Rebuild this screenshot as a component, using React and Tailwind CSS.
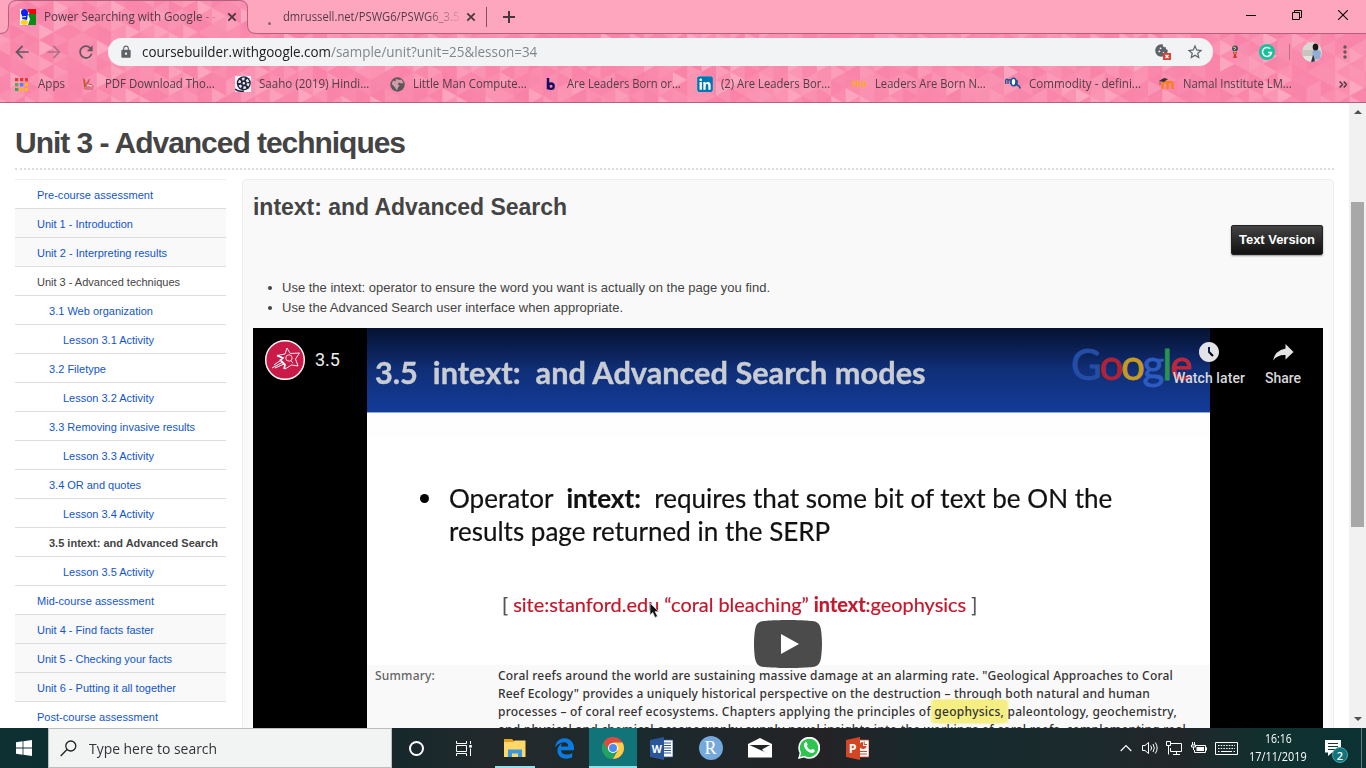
import React, { useLayoutEffect, useRef, useState } from "react";
import { MdArrowBack, MdArrowForward, MdRefresh, MdLock, MdStarBorder, MdCookie, MdAccessTimeFilled, MdMoreVert } from "react-icons/md";
import { FaLinkedin, FaEdgeLegacy } from "react-icons/fa6";

/* Spreads a single line of text over the width of its box. */
function Fit({ className = "", children }) {
  const ref = useRef(null);
  const [spacing, setSpacing] = useState(0);
  useLayoutEffect(() => {
    const el = ref.current;
    const natural = el.getBoundingClientRect().width;
    setSpacing((el.parentElement.clientWidth - natural) / el.textContent.length);
  }, []);
  return (
    <span className={"block shrink-0 whitespace-pre " + className}>
      <span ref={ref} className="inline-block" style={{ letterSpacing: spacing + "px" }}>{children}</span>
    </span>
  );
}

/* Condenses a single line of text to the width of its box. */
function Squeeze({ className = "", inner = "", children }) {
  const ref = useRef(null);
  const [scale, setScale] = useState(1);
  useLayoutEffect(() => {
    const el = ref.current;
    setScale(el.parentElement.clientWidth / el.offsetWidth);
  }, []);
  return (
    <span className={"block shrink-0 whitespace-pre " + className}>
      <span ref={ref} className={"inline-block origin-left " + inner} style={{ transform: `scaleX(${scale})` }}>{children}</span>
    </span>
  );
}

function rand(seed) {
  const v = Math.sin(seed * 127.1 + 11.7) * 43758.5453;
  return v - Math.floor(v);
}

function ThemeBackdrop() {
  const tris = [];
  const w = 14.4;
  const h = 16;
  for (let c = 0; c < 96; c++) {
    for (let r = -1; r < 14; r++) {
      const x = c * w - 4;
      const y = (r * h) / 2;
      const right = (r + c) % 2 === 0;
      const k = rand(c * 31 + r * 7.3 + 5);
      const pts = right
        ? `${x},${y} ${x + w},${y + h / 2} ${x},${y + h}`
        : `${x + w},${y} ${x},${y + h / 2} ${x + w},${y + h}`;
      const light = k > 0.4;
      tris.push(
        <polygon key={c + "_" + r} points={pts} fill={light ? "#ffc0d0" : "#f7759f"} opacity={light ? (right ? (k - 0.35) * 0.85 : (k - 0.38) * 0.35) : (0.45 - k) * 0.8} />
      );
    }
  }
  return (
    <svg className="absolute inset-0" width="1366" height="103" viewBox="0 0 1366 103">
      <rect width="1366" height="103" fill="#fa8bae" />
      {tris}
      <path d="M0 0H16Q8.500 .5 8.500 8V25Q8.500 33.500 0 33.500ZM240 0H1366V33.500H256Q247.500 33.500 247.500 25V8Q247.500 .5 240 0Z" fill="#ffa6bf" />
      <path d="M0 33.500Q8.500 33.500 8.500 25V8.500Q8.500 .5 16.500 .5H239.500Q247.500 .5 247.500 8.500V25Q247.500 33.500 256 33.500H1366" fill="none" stroke="#b2607e" />
      <path d="M0 102.500H1366" stroke="#b2607e" />
    </svg>
  );
}

function Cross({ className = "" }) {
  return (
    <svg className={"shrink-0 " + className} width="10" height="10" viewBox="0 0 10 10"><path d="M1.300 1.300L8.700 8.700M8.700 1.300L1.300 8.700" stroke="#46363d" strokeWidth="1.700" /></svg>
  );
}

const ui = "font-['Open_Sans','Noto_Sans',sans-serif]";

function TabStrip() {
  return (
    <div className="relative flex h-[34px] items-center">
      <svg className="ml-[20px] shrink-0" width="16" height="16" viewBox="0 0 16 16">
        <rect width="16" height="16" fill="#fff" />
        <path d="M7 0H16V6H10Z" fill="#f00" /><path d="M8 5H16V16H8L10 10Z" fill="#0a8a14" />
        <circle cx="4.500" cy="3.500" r="3.500" fill="#0b24f5" /><path d="M2 6L8 4 7 11 2 10Z" fill="#0b24f5" /><path d="M2 8L6 7.500" stroke="#fff" /><ellipse cx="4.300" cy="13.300" rx="3.600" ry="2.600" fill="#ffd21c" />
      </svg>
      <Squeeze className="ml-[8px] w-[172px] text-[12px]" inner="bg-gradient-to-r from-[#4b3841] from-90% to-[#4b384133] bg-clip-text text-transparent">Power Searching with Google - -</Squeeze>
      <Cross className="ml-[11px]" />
      <span className="ml-[31px] mt-[13px] size-[3px] shrink-0 rounded-full bg-[#8f6473]" />
      <Squeeze className="ml-[12px] w-[176px] text-[12px]" inner="bg-gradient-to-r from-[#4b3841] from-80% to-[#4b384122] bg-clip-text text-transparent">dmrussell.net/PSWG6/PSWG6_3.5</Squeeze>
      <Cross className="ml-[7px]" />
      <span className="ml-[10px] h-[20px] w-px shrink-0 bg-[#7b5361]" />
      <svg className="ml-[16px] shrink-0" width="12" height="12" viewBox="0 0 12 12"><path d="M6 0V12M0 6H12" stroke="#46363d" strokeWidth="2" /></svg>
      <div className="mb-[5px] ml-auto mr-[18px] flex items-center gap-[36px]">
        <svg width="10" height="10"><path d="M0 5.500H10" stroke="#000" /></svg>
        <svg width="10" height="10"><path d="M.5 2.500H7.500V9.500H.5ZM2.500 2.500V.5H9.500V7.500H7.500" fill="none" stroke="#000" /></svg>
        <svg width="10" height="10"><path d="M0 0L10 10M10 0L0 10" stroke="#000" strokeWidth="1.100" /></svg>
      </div>
    </div>
  );
}

function Toolbar() {
  return (
    <div className="relative flex h-[36px] items-center text-[#5f5860]">
      <MdArrowBack className="ml-[12px] size-[20px] shrink-0" />
      <MdArrowForward className="ml-[12px] size-[20px] shrink-0 opacity-50" />
      <MdRefresh className="ml-[12px] size-[20px] shrink-0" />
      <div className="ml-[12px] flex h-[28px] w-[1105px] shrink-0 items-center rounded-full bg-[#f1f3f4]">
        <MdLock className="ml-[11px] size-[14px] text-[#5f6368]" />
        <Squeeze className="ml-[9px] w-[395px] text-[14px] leading-[20px] text-[#80868b]"><span className="text-[#202124]">coursebuilder.withgoogle.com</span>/sample/unit?unit=25&amp;lesson=34</Squeeze>
        <span className="relative ml-auto mr-[16px] flex size-[16px] text-[#5f6368]">
          <MdCookie className="-mt-px size-[15px]" />
          <svg className="absolute bottom-0 right-[-1px]" width="8" height="7" viewBox="0 0 8 7"><rect width="8" height="7" fill="#db4437" /><path d="M2.500 2L5.500 5M5.500 2L2.500 5" stroke="#fff" strokeWidth="1.200" /></svg>
        </span>
        <MdStarBorder className="mr-[9px] size-[18px] text-[#5f6368]" />
      </div>
      <svg className="ml-[18px] shrink-0" width="8" height="14" viewBox="0 0 8 14"><circle cx="4" cy="3.500" r="3" fill="#3b5966" /><path d="M2 2L5 3 3 5" stroke="#e8b45b" fill="none" /><path d="M2 7H6L5 10 6 13H2L3 10Z" fill="#c63b32" /><path d="M4 6V9" stroke="#e9b25b" /></svg>
      <svg className="ml-[20px] shrink-0" width="16" height="16" viewBox="0 0 16 16"><circle cx="8" cy="8" r="8" fill="#15c39a" /><path d="M11.300 4.800A4.500 4.500 0 1 0 12.500 8.500H9M12.500 8.500L11 11" fill="none" stroke="#fff" strokeWidth="1.500" /></svg>
      <span className="ml-[14px] h-[16px] w-px shrink-0 bg-[#bd6f88]" />
      <svg className="ml-[12px] shrink-0 rounded-full" width="20" height="20" viewBox="0 0 20 20"><rect width="20" height="20" fill="#d9d8d3" /><path d="M0 8H12V20H0Z" fill="#c6c5bf" /><path d="M0 14H12V20H0Z" fill="#e5e3de" /><path d="M10.500 9Q15 5 19 10L18 17 11 18Z" fill="#8eaed6" /><ellipse cx="13.500" cy="5" rx="2.800" ry="3.500" fill="#1c1719" /><path d="M11 13L9 20H13L12 15Z" fill="#302e38" /></svg>
      <MdMoreVert className="ml-[13px] size-[20px] shrink-0" />
    </div>
  );
}

const bookmarks = [
  ["w-[110px]", "PDF Download Tho...", <svg width="16" height="16" viewBox="0 0 16 16"><path d="M2 2Q5 3 5 12H3Z" fill="#c45a20" /><path d="M5 8Q8 2 9 3L7 9Q10 6 12 10L6 14Z" fill="#d94c5d" /><path d="M2 12Q8 7 13 10L12 14H4Z" fill="#e07587" /><path d="M6 9L11 10" stroke="#fff" /></svg>],
  ["w-[110px]", "Saaho (2019) Hindi...", <svg width="16" height="16" viewBox="0 0 16 16"><rect width="16" height="16" fill="#f1f1f5" /><circle cx="8.800" cy="7.300" r="7" fill="#20243c" /><circle cx="8.800" cy="7.300" r="4.400" fill="none" stroke="#e8e9ef" strokeWidth="2.600" strokeDasharray="2.600 2" /><circle cx="8.800" cy="7.300" r="1.200" fill="#fff" /><path d="M0 13Q3 16 9 15" stroke="#20243c" strokeWidth="1.500" fill="none" /></svg>],
  ["w-[114px]", "Little Man Compute...", <svg width="15" height="15" viewBox="0 0 15 15"><circle cx="7.500" cy="7.500" r="7.200" fill="#5d565b" /><path d="M6 1.800Q8 3.500 11.500 2.500L13.500 6 11 6.500 9.500 5.500 7.500 7 9.500 8.500 8 10.500 7 13.500 5 10.500 1.800 7 3 3.500 5.500 4.500Z" fill="#f8b5c8" opacity=".75" /></svg>],
  ["w-[114px]", "Are Leaders Born or...", <svg width="16" height="16" viewBox="0 0 16 16"><path d="M5 2V13.300" stroke="#160b63" strokeWidth="2.500" /><circle cx="8" cy="10.200" r="2.700" fill="none" stroke="#160b63" strokeWidth="2.300" /></svg>],
  ["w-[109px]", "(2) Are Leaders Bor...", <span className="flex size-[16px] items-center justify-center overflow-hidden rounded-[2px] bg-white"><FaLinkedin className="size-[18px] shrink-0 text-[#0077b5]" /></span>],
  ["w-[111px]", "Leaders Are Born N...", <span className="text-[8px] font-extrabold tracking-[-0.3px] text-[#f9a63f]">PhD</span>],
  ["w-[112px]", "Commodity - defini...", <svg width="16" height="16" viewBox="0 0 16 16" fill="none" stroke="#155593"><path d="M.7 8V4Q3 2 3 5V8M3 5Q5 2 5.500 5V8" strokeWidth="1.300" /><ellipse cx="8.500" cy="6" rx="2.500" ry="3.800" fill="#fff" strokeWidth="1.500" /><path d="M10 10L12 4V9Q14 9 15.500 12.500" strokeWidth="1.500" /></svg>],
  ["w-[109px]", "Namal Institute LM...", <svg width="16" height="16" viewBox="0 0 16 16"><path d="M3.500 13V8Q3.500 6 6 6T8.500 8V13M8.500 8Q8.500 6 11 6T13.500 8V13" fill="none" stroke="#f98012" strokeWidth="2.300" /><path d="M0 5L5 2 9 3 5 6Z" fill="#333" /><path d="M1 5V9" stroke="#555" strokeWidth=".7" /></svg>],
];

function BookmarksBar() {
  const dots = ["#e53935", "#e53935", "#e53935", "#4caf50", "#4285f4", "#fbbc05", "#43a047", "#fbbc05", "#fbbc05"];
  return (
    <div className="relative flex h-[28px] items-center text-[12px] text-[#503d46]">
      <svg className="ml-[15px] shrink-0" width="13" height="13" viewBox="0 0 13 13">
        {dots.map((d, i) => <rect key={i} x={(i % 3) * 5} y={Math.floor(i / 3) * 5} width="3.300" height="3.300" fill={d} />)}
      </svg>
      <Squeeze className="ml-[10px] w-[27px]">Apps</Squeeze>
      <div className="ml-[16px] flex">
        {bookmarks.map(([w, label, icon]) => (
          <div key={label} className="flex w-[154px] shrink-0 items-center gap-[8px]">
            <span className="flex w-[16px] shrink-0 items-center justify-center">{icon}</span>
            <Squeeze className={w}>{label}</Squeeze>
          </div>
        ))}
      </div>
      <svg className="ml-[26px] shrink-0" width="8" height="7" viewBox="0 0 8 7"><path d="M.7 .5L3.500 3.500.7 6.500M4.700 .5L7.500 3.500 4.700 6.500" fill="none" stroke="#46363d" strokeWidth="1.400" /></svg>
    </div>
  );
}

const lessons = [
  ["Pre-course assessment", "ml-[22px] w-[116px]", "bg-white text-[#1155cc]"],
  ["Unit 1 - Introduction", "ml-[22px] w-[96px]", "bg-[#f9f9f9] text-[#1155cc]"],
  ["Unit 2 - Interpreting results", "ml-[22px] w-[130px]", "bg-[#f9f9f9] text-[#1155cc]"],
  ["Unit 3 - Advanced techniques", "ml-[22px] w-[143px]", "bg-white text-[#444]"],
  ["3.1 Web organization", "ml-[34px] w-[104px]", "bg-white text-[#1155cc]"],
  ["Lesson 3.1 Activity", "ml-[48px] w-[91px]", "bg-white text-[#1155cc]"],
  ["3.2 Filetype", "ml-[34px] w-[57px]", "bg-white text-[#1155cc]"],
  ["Lesson 3.2 Activity", "ml-[48px] w-[91px]", "bg-white text-[#1155cc]"],
  ["3.3 Removing invasive results", "ml-[34px] w-[146px]", "bg-white text-[#1155cc]"],
  ["Lesson 3.3 Activity", "ml-[48px] w-[91px]", "bg-white text-[#1155cc]"],
  ["3.4 OR and quotes", "ml-[34px] w-[92px]", "bg-white text-[#1155cc]"],
  ["Lesson 3.4 Activity", "ml-[48px] w-[91px]", "bg-white text-[#1155cc]"],
  ["3.5 intext: and Advanced Search", "ml-[34px] w-[169px] font-bold", "bg-white text-[#444]"],
  ["Lesson 3.5 Activity", "ml-[48px] w-[91px]", "bg-white text-[#1155cc]"],
  ["Mid-course assessment", "ml-[22px] w-[117px]", "bg-white text-[#1155cc]"],
  ["Unit 4 - Find facts faster", "ml-[22px] w-[117px]", "bg-[#f9f9f9] text-[#1155cc]"],
  ["Unit 5 - Checking your facts", "ml-[22px] w-[135px]", "bg-[#f9f9f9] text-[#1155cc]"],
  ["Unit 6 - Putting it all together", "ml-[22px] w-[139px]", "bg-[#f9f9f9] text-[#1155cc]"],
  ["Post-course assessment", "ml-[22px] w-[121px]", "bg-white text-[#1155cc]"],
];

function Sidebar() {
  return (
    <nav className="w-[211px] shrink-0 border-t border-[#eee] text-[11px] leading-[28px]">
      {lessons.map(([label, pos, tone]) => (
        <div key={label} className={"flex h-[29px] border-b border-[#ddd] pt-px " + tone}>
          <Fit className={pos}>{label}</Fit>
        </div>
      ))}
    </nav>
  );
}

function Slide() {
  return (
    <div className="ml-[114px] flex h-[400px] w-[843px] flex-col overflow-hidden bg-white font-['Lato',sans-serif] text-[#111]">
      <div className="flex h-[85px] shrink-0 items-start border-b border-[#8fa6d6] bg-gradient-to-b from-[#061231] via-[#102f78] to-[#123b98]">
        <Squeeze className="ml-[8px] mt-[24px] w-[551px] text-[30.5px] leading-[40px] text-[#c9cdd3]" inner="font-bold [-webkit-text-stroke:0.4px_currentColor]">3.5  intext:  and Advanced Search modes</Squeeze>
        <Fit className="ml-[145px] mt-[11px] w-[119px] text-[42px] leading-[50px] text-[#2d5cc0] [-webkit-text-stroke:0.800px_currentColor]">
          <span className="text-[#244da5]">G</span><span className="text-[#b02334]">o</span><span className="text-[#c49a24]">o</span><span>g</span><span className="text-[#2a9350]">l</span><span className="text-[#c02638]">e</span>
        </Fit>
      </div>
      <div className="flex h-[252px] shrink-0 flex-col border-t-[24px] border-[#fefefe] pt-[44px]">
        <div className="ml-[53px] flex items-center">
          <span className="mt-[1px] size-[9px] rounded-full bg-black" />
          <Squeeze className="ml-[20px] w-[663px] text-[26.5px] leading-[34px]" inner="[-webkit-text-stroke:0.2px_currentColor]">Operator  <b>intext:</b>  requires that some bit of text be ON the</Squeeze>
        </div>
        <Squeeze className="ml-[82px] w-[381px] text-[26.5px] leading-[33px]" inner="[-webkit-text-stroke:0.2px_currentColor]">results page returned in the SERP</Squeeze>
        <Squeeze className="ml-[135px] mt-[42px] w-[475px] text-[20px] leading-[28px] text-[#c4172b]" inner="[-webkit-text-stroke:0.2px_currentColor]"><span className="text-[#555]">[ </span>site:stanford.edu “coral bleaching” <b>intext</b>:geophysics<span className="text-[#555]"> ]</span></Squeeze>
      </div>
      <div className="flex grow bg-[#f9f9f9] pt-[2px] font-['Noto_Sans',sans-serif] text-[12px] leading-[18px] text-[#333]">
        <Fit className="ml-[8px] w-[60px] font-medium text-[#666]">Summary:</Fit>
        <div className="ml-[63px] font-medium">
          <Fit className="w-[675px]">Coral reefs around the world are sustaining massive damage at an alarming rate. "Geological Approaches to Coral</Fit>
          <Fit className="w-[652px]">Reef Ecology" provides a uniquely historical perspective on the destruction – through both natural and human</Fit>
          <Fit className="w-[679px]">processes – of coral reef ecosystems. Chapters applying the principles of <span className="bg-[#f5ef83] py-[3px] shadow-[-3px_0_2px_#f5ef83,4px_0_2px_#f5ef83]">geophysics,</span> paleontology, geochemistry,</Fit>
          <Fit className="w-[688px]">and physical and chemical oceanography supply novel insights into the workings of coral reefs, complementing real</Fit>
        </div>
      </div>
    </div>
  );
}

function Video() {
  return (
    <div className="relative h-[400px] w-[1070px] overflow-hidden bg-black font-['Roboto',sans-serif]">
      <Slide />
      <div className="absolute left-[12px] top-[12px] flex items-center">
        <svg width="40" height="40" viewBox="0 0 40 40">
          <circle cx="20" cy="20" r="19.300" fill="#c91a48" stroke="#fff" strokeWidth="1.400" />
          <path d="M22 8L25.200 13.500 34.500 13 30.500 19 33 26 26.500 25 20 29 19.500 25 15.500 21 18 18 12 15.500 20 14Z" fill="none" stroke="#fff" strokeWidth=".9" />
          <circle cx="24" cy="18" r="3.200" fill="none" stroke="#fff" strokeWidth=".8" /><path d="M26 21L28 23" stroke="#fff" strokeWidth=".8" />
          <path d="M12 15.500L18 18 15.500 20 20 24.500 19 29" fill="none" stroke="#fff" strokeWidth="1.600" /><path d="M16 20L9 25M18 22L7 28M19 24L10 28" stroke="#fff" strokeWidth="1" />
        </svg>
        <Fit className="ml-[10px] mt-[-2px] w-[25px] text-[18px] text-[#eee]">3.5</Fit>
      </div>
      <div className="absolute left-[920px] top-[12px] flex w-[72px] flex-col items-center text-[14px] font-medium text-[#e4e4e8]">
        <MdAccessTimeFilled className="size-[24px]" />
        <Fit className="mt-[4px] w-[72px] text-[#d8d8dc]">Watch later</Fit>
      </div>
      <div className="absolute left-[1012px] top-[12px] flex w-[36px] flex-col items-center text-[14px] font-medium text-[#d8d8dc]">
        <svg width="24" height="24" viewBox="0 0 24 24"><path d="M14.500 4L22.500 12 14.500 19.500V15Q6.500 14.500 2 20.500Q4 10.500 14.500 8.500Z" fill="#e4e4e4" /></svg>
        <Fit className="mt-[4px] w-[36px]">Share</Fit>
      </div>
      <svg className="absolute left-[396px] top-[275px]" width="12" height="17" viewBox="0 0 12 17"><path d="M1 0V12L3.800 9.500 6 14.500 8.500 13.200 6 8.500H9.500Z" fill="#111" stroke="#ddd" strokeWidth=".7" /></svg>
      <svg className="absolute left-[501px] top-[292px]" width="68" height="48" viewBox="0 0 68 48">
        <path d="M66.520 7.740c-.78-2.930-2.490-5.410-5.420-6.190C55.790.13 34 0 34 0S12.210.13 6.900 1.550C3.970 2.330 2.270 4.810 1.480 7.740.06 13.050 0 24 0 24s.06 10.950 1.480 16.260c.78 2.930 2.490 5.410 5.420 6.190C12.210 47.870 34 48 34 48s21.790-.13 27.100-1.550c2.930-.78 4.640-3.260 5.420-6.190C67.940 34.950 68 24 68 24s-.06-10.950-1.480-16.260z" fill="#4b4b4b" />
        <path d="M45 24L27 14V34" fill="#fff" />
      </svg>
    </div>
  );
}

function Page() {
  return (
    <div className="flex h-[625px] overflow-hidden bg-white font-['Liberation_Sans',Arial,sans-serif] text-[#444]">
      <div className="w-[1349px] pl-[15px] pr-[15px] pt-[20px]">
        <div className="h-[47px] border-b-2 border-dotted border-[#ddd]">
          <Fit className="w-[390px] text-[30px] font-bold leading-[40px]">Unit 3 - Advanced techniques</Fit>
        </div>
        <div className="mt-[9px] flex justify-between">
          <Sidebar />
          <main className="w-[1092px] rounded-[4px] border border-[#eee] bg-[#f9f9f9] pl-[10px]">
            <Fit className="mt-[12px] w-[314px] text-[23px] font-bold leading-[30px]">intext: and Advanced Search</Fit>
            <div className="mr-[10px] mt-[3px] flex justify-end">
              <div className="flex h-[30px] w-[92px] items-center justify-center rounded-[2px] border border-[#222] bg-gradient-to-b from-[#444] to-[#111] text-[13px] font-bold text-white shadow-[0_1px_2px_rgba(0,0,0,0.4)]">
                <Fit className="w-[76px]">Text Version</Fit>
              </div>
            </div>
            <ul className="mt-[23px] text-[13px] leading-[20px]">
              <li className="flex items-center"><span className="ml-[15px] size-[4px] rounded-full bg-[#444]" /><Fit className="ml-[10px] w-[488px]">Use the intext: operator to ensure the word you want is actually on the page you find.</Fit></li>
              <li className="flex items-center"><span className="ml-[15px] size-[4px] rounded-full bg-[#444]" /><Fit className="ml-[10px] w-[341px]">Use the Advanced Search user interface when appropriate.</Fit></li>
            </ul>
            <div className="mt-[10px]"><Video /></div>
          </main>
        </div>
      </div>
      <div className="flex w-[17px] flex-col items-center bg-[#f1f1f1]">
        <svg className="mt-[7px]" width="8" height="4"><path d="M4 0L8 4H0Z" fill="#505050" /></svg>
        <div className="mt-[88px] h-[325px] w-[13px] bg-[#a8a8a8]" />
        <svg className="mb-[7px] mt-auto" width="8" height="4"><path d="M0 0H8L4 4Z" fill="#505050" /></svg>
      </div>
    </div>
  );
}

function Office({ color, dark, letter }) {
  return (
    <svg width="23" height="23" viewBox="0 0 23 23">
      <rect x="12" y="3" width="11" height="17" fill="#fff" stroke={color} strokeWidth=".8" />
      {letter === "W"
        ? <path d="M14 6H21M14 8.500H21M14 11H21M14 13.500H21M14 16H21" stroke={color} strokeWidth="1.200" />
        : <g><path d="M14 14.500H21M14 17H21" stroke={color} strokeWidth="1.200" /><path d="M17 5A3.500 3.500 0 1 0 20.500 9H17Z" fill={color} /><path d="M18.200 4.500V7.500H21" stroke={color} fill="none" /></g>}
      <path d="M0 3L14 0V23L0 20Z" fill={dark} />
      <text x="6.800" y="15.800" textAnchor="middle" fontFamily="Open Sans" fontWeight="700" fontSize={letter === "W" ? "10.5" : "12.5"} fill="#fff">{letter}</text>
    </svg>
  );
}

function TaskIcon({ children }) {
  return <div className="flex h-[40px] w-[49px] shrink-0 items-center justify-center">{children}</div>;
}

function Taskbar() {
  return (
    <div className={"flex h-[40px] items-center bg-[linear-gradient(90deg,#0d3033_0%,#15282c_28%,#23292b_37%,#1b2a2d_47%,#242326_60%,#162a2e_69%,#1b2a2d_79%,#222629_86%,#10302f_93%,#0c3234_100%)] " + ui}>
      <div className="flex w-[48px] shrink-0 justify-center">
        <svg width="16" height="16" viewBox="0 0 16 16"><path d="M0 2.200L6.600 1.300V7.600H0ZM7.400 1.200L16 0V7.600H7.400ZM0 8.400H6.600V14.700L0 13.800ZM7.400 8.400H16V16L7.400 14.800Z" fill="#fff" /></svg>
      </div>
      <div className="flex h-[40px] w-[344px] shrink-0 items-center border border-[#bcbfbf] bg-[#f2f3f3]">
        <svg className="ml-[11px]" width="17" height="17" viewBox="0 0 17 17"><circle cx="10.800" cy="6" r="5" fill="none" stroke="#222" strokeWidth="1.300" /><path d="M7 9.500L.7 16" stroke="#222" strokeWidth="1.300" /></svg>
        <Squeeze className="ml-[12px] w-[128px] text-[15px] text-[#303438]">Type here to search</Squeeze>
      </div>
      <div className="flex w-[48px] shrink-0 justify-center"><span className="size-[15px] rounded-full border-[2.500px] border-white" /></div>
      <div className="flex w-[48px] shrink-0 justify-center">
        <svg width="16" height="15" viewBox="0 0 16 15" fill="none" stroke="#fff"><path d="M.5 0V2.500H10.500V0M.5 15V12.500H10.500V15M.5 4.500H10.500V10.500H.5ZM14.500 0V3M14.500 7.500V15" /><rect x="13.200" y="4" width="2.600" height="2.600" fill="#fff" stroke="none" /></svg>
      </div>
      <div className="ml-[7px] flex h-[40px] w-[40px] shrink-0 items-center justify-center border-b-2 border-[#8fe3e8] pt-[2px]">
        <svg width="22" height="19" viewBox="0 0 22 19"><path d="M0 0H8L10 2H21V8H0Z" fill="#e6a117" /><path d="M0 3H9L11 1.500H21.500V18H0Z" fill="#ffd869" /><path d="M4 10.500H18V18H14V14.500H8V18H4Z" fill="#3d98db" /></svg>
      </div>
      <div className="flex w-[54px] shrink-0 justify-center pl-[5px]"><FaEdgeLegacy className="size-[21px] text-[#0a7be0]" /></div>
      <div className="flex h-[40px] w-[48px] shrink-0 items-center justify-center border-b-2 border-[#8fe3e8] bg-[#117479] pt-[2px]">
        <svg width="22" height="22" viewBox="0 0 22 22"><circle cx="11" cy="11" r="11" fill="#dd4b3e" /><path d="M1.470 5.500A11 11 0 0 0 11 22L15.760 13.750 11 11H5Z" fill="#1da462" /><path d="M11 22A11 11 0 0 0 20.500 5.500H11L15.800 13.700Z" fill="#ffcd46" /><circle cx="11" cy="11" r="5.100" fill="#fff" /><circle cx="11" cy="11" r="4" fill="#4c8bf5" /></svg>
      </div>
      <TaskIcon><Office letter="W" color="#2b579a" dark="#2a5699" /></TaskIcon>
      <TaskIcon><span className="flex size-[24px] items-center justify-center rounded-full bg-[#75a9dc] font-['Liberation_Serif',serif] text-[18px] text-white">R</span></TaskIcon>
      <TaskIcon><svg width="24" height="20" viewBox="0 0 24 20"><path d="M0 6L12 0 24 6V19.500H0Z" fill="#fff" /><path d="M1.500 7H22L14 11.500 16 13.500 20 15.500Z" fill="#222629" /></svg></TaskIcon>
      <TaskIcon>
        <svg width="22" height="22" viewBox="0 0 22 22"><path d="M0 22L1.600 16A11 11 0 1 1 6 20.400Z" fill="#fff" /><path d="M2 20L3.300 15.900A9.200 9.200 0 1 1 6.300 18.800Z" fill="#2cc64f" /><path d="M7.300 5.300Q8.500 4.600 9 6L9.600 7.700Q9.300 8.600 8.700 9Q10 12 13 13Q14 11.800 14.500 11.900L16.700 13Q17 15.500 14 16Q9.500 15.800 6.500 10.500Q5 7 7.300 5.300Z" fill="#fff" /></svg>
      </TaskIcon>
      <TaskIcon><Office letter="P" color="#d24625" dark="#d24625" /></TaskIcon>
      <div className="ml-auto flex shrink-0 items-center text-white">
        <svg width="12" height="8" viewBox="0 0 12 8"><path d="M.7 7L6 1.500 11.300 7" fill="none" stroke="#fff" strokeWidth="1.200" /></svg>
        <svg className="ml-[10px]" width="17" height="14" viewBox="0 0 17 14" fill="none" stroke="#fff"><path d="M.5 4.500H3L6.500 1.500V12.500L3 9.500H.5ZM8.700 4.500Q10.500 7 8.700 9.500M11 3Q13.700 7 11 11M13.300 1.500Q17 7 13.300 12.500" /></svg>
        <svg className="ml-[7px]" width="17" height="14" viewBox="0 0 17 14" fill="none" stroke="#fff"><path d="M5 2.500H15.500V10.500H4.500V7M10.500 10.500V13.500M7 13.500H14M.5 .5H4.500V4.500H.5ZM2.500 4.500V13.500" /></svg>
        <svg className="ml-[8px]" width="16" height="13" viewBox="0 0 16 13" fill="none" stroke="#fff"><path d="M5 3.500H14.500V10.500H3.500V8M14.500 5.500H15.500V8.500" /><rect x="5.500" y="5" width="7.500" height="4" fill="#fff" stroke="none" /><path d="M1.500 0V3M3.500 0V3M.5 3H4.500V5H.5ZM2.500 5V8" /></svg>
        <svg className="ml-[8px]" width="23" height="13" viewBox="0 0 23 13" fill="none" stroke="#fff"><path d="M.5 .5H22.500V12.500H.5Z" /><path d="M3 3.500H20M3 6.500H20" strokeDasharray="1.500 1.200" /><path d="M6 9.500H17M3 9.500H4.500M18.500 9.500H20" /></svg>
        <div className="ml-[11px] flex w-[58px] flex-col items-center text-[12px] leading-[18px]">
          <Squeeze className="w-[27px]">16:16</Squeeze>
          <Squeeze className="w-[58px]">17/11/2019</Squeeze>
        </div>
        <div className="relative ml-[18px] h-[26px] w-[36px]">
          <svg className="absolute left-0 top-[5px]" width="16" height="17" viewBox="0 0 16 17"><path d="M0 0H16V12.500H7L3 16V12.500H0Z" fill="#fff" /><path d="M3 3.500H13M3 6.500H13M3 9.500H10" stroke="#16363a" /></svg>
          <span className="absolute left-[7px] top-[12px] flex size-[16px] items-center justify-center rounded-full border border-[#4ba5aa] bg-[#11757b] text-[11px] font-semibold leading-none">2</span>
        </div>
        <span className="mr-[4px] h-[40px] w-px bg-[#63797b]" />
      </div>
    </div>
  );
}

export default function App() {
  return (
    <div className="flex h-[768px] w-[1366px] flex-col overflow-hidden">
      <header className={"relative h-[103px] shrink-0 " + ui}>
        <ThemeBackdrop />
        <TabStrip />
        <Toolbar />
        <BookmarksBar />
      </header>
      <Page />
      <Taskbar />
    </div>
  );
}
